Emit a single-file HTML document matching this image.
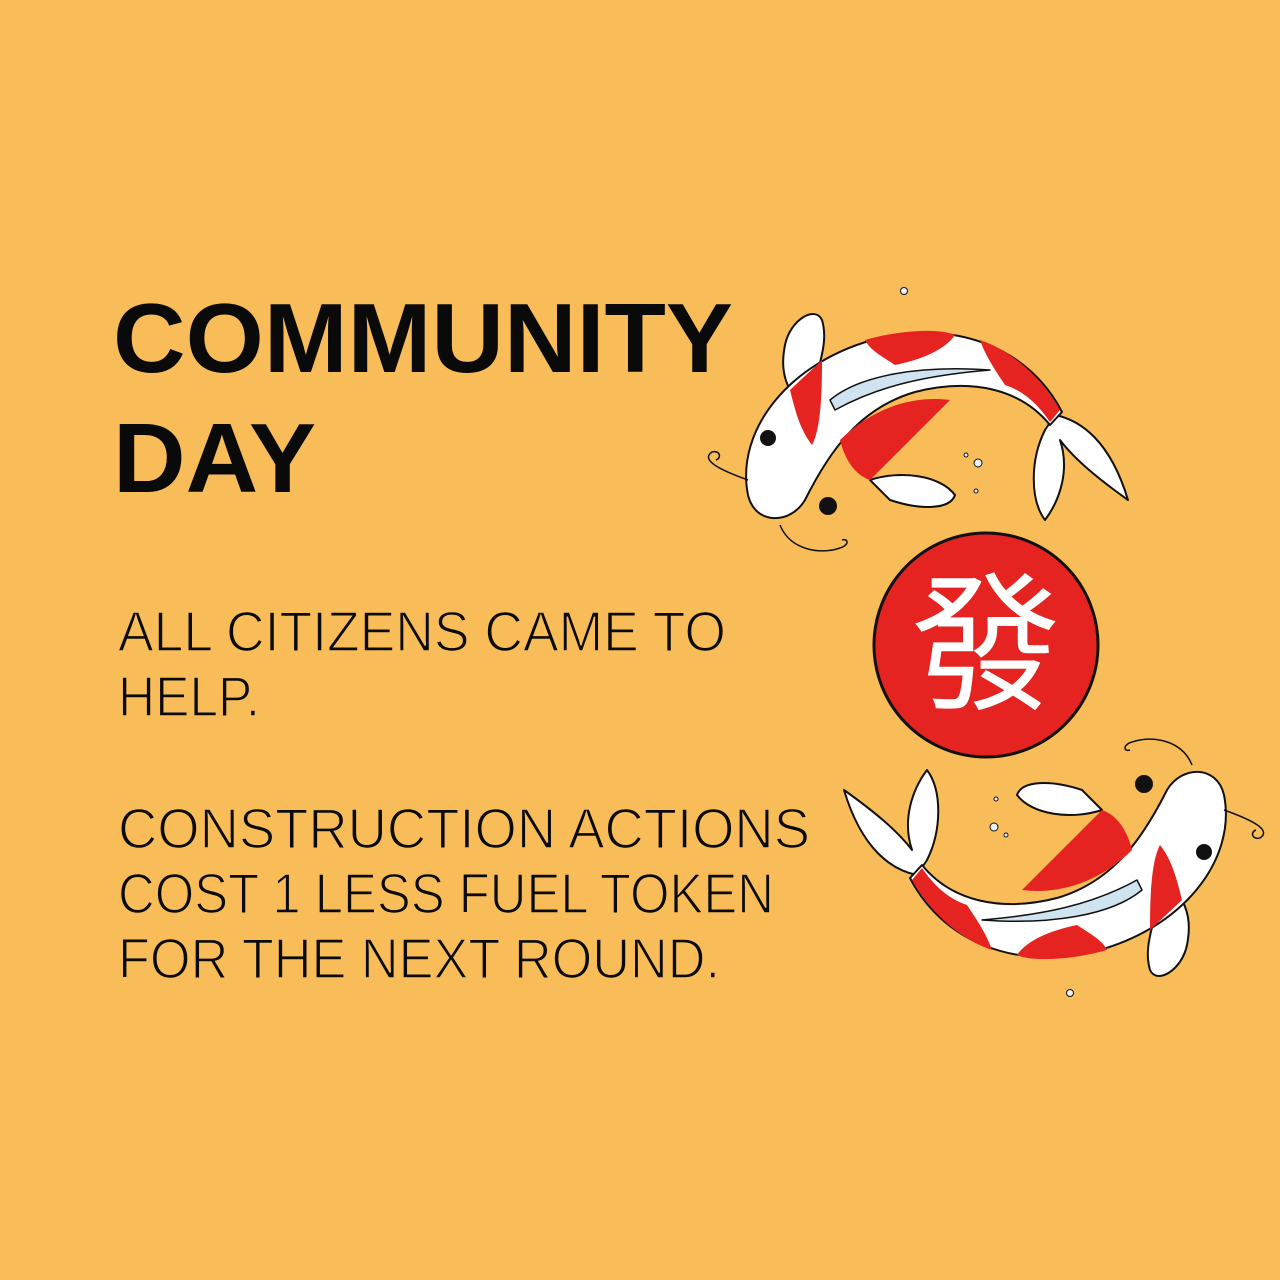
<!DOCTYPE html>
<html><head><meta charset="utf-8"><style>
html,body{margin:0;padding:0;background:#F8BD58;}
svg{display:block}
</style></head><body>
<svg width="1280" height="1280" viewBox="0 0 1280 1280" xmlns="http://www.w3.org/2000/svg">
<rect width="1280" height="1280" fill="#F8BD58"/>
<g font-family="'Liberation Sans', sans-serif" fill="#0a0a0a">
<text x="113" y="372" font-size="98" font-weight="bold" textLength="620" lengthAdjust="spacingAndGlyphs">COMMUNITY</text>
<text x="113" y="492" font-size="98" font-weight="bold" textLength="203" lengthAdjust="spacingAndGlyphs">DAY</text>
<g font-size="57" stroke="#F8BD58" stroke-width="1.6">
<text x="118" y="651" textLength="608" lengthAdjust="spacingAndGlyphs">ALL CITIZENS CAME TO</text>
<text x="118" y="716" textLength="142" lengthAdjust="spacingAndGlyphs">HELP.</text>
<text x="118" y="848" textLength="692" lengthAdjust="spacingAndGlyphs">CONSTRUCTION ACTIONS</text>
<text x="118" y="913" textLength="656" lengthAdjust="spacingAndGlyphs">COST 1 LESS FUEL TOKEN</text>
<text x="118" y="978" textLength="602" lengthAdjust="spacingAndGlyphs">FOR THE NEXT ROUND.</text>
</g>
</g>
<defs>
<g id="fish" stroke="#111" stroke-width="2" stroke-linejoin="round">
<path d="M1055,415 C1080,420 1110,440 1128,500 C1100,480 1075,460 1060,440 C1070,470 1060,500 1045,520 C1030,500 1030,460 1045,430 Z" fill="#fff"/>
<path d="M785,345 C790,320 815,305 822,320 C828,340 820,360 818,372 L790,390 C782,375 782,360 785,345 Z" fill="#fff"/>
<path d="M870,480 C900,470 940,475 955,495 C950,510 920,510 890,500 Z" fill="#fff"/>
<path d="M748,495 C735,430 790,360 880,338 C960,320 1030,350 1062,412 L1050,425 C1020,388 970,378 915,392 C860,408 830,450 805,500 C790,525 755,525 748,495 Z" fill="#fff"/>
<path d="M790,390 L822,360 C822,400 820,430 812,445 C800,430 795,410 790,390 Z" fill="#e52421" stroke="none"/>
<path d="M840,440 C870,410 910,395 950,400 C930,420 900,450 870,480 C855,475 845,460 840,440 Z" fill="#e52421" stroke="none"/>
<path d="M865,340 C900,330 940,328 955,335 C945,350 920,360 895,365 C880,355 870,350 865,340 Z" fill="#e52421" stroke="none"/>
<path d="M980,340 C1010,350 1040,375 1060,410 L1050,422 C1035,400 1020,390 1005,385 C995,370 985,355 980,340 Z" fill="#e52421" stroke="none"/>
<path d="M830,400 C860,375 920,365 990,370 C930,375 880,385 835,410 Z" fill="#cfe3f0" stroke="#111" stroke-width="1.5"/>
<circle cx="768" cy="438" r="8" fill="#111" stroke="none"/>
<circle cx="828" cy="506" r="9" fill="#111" stroke="none"/>
<path d="M748,480 C720,470 700,460 712,452 C720,450 722,458 716,460" fill="none" stroke-width="1.5"/>
<path d="M780,525 C790,550 820,555 840,548 C850,545 848,538 842,540" fill="none" stroke-width="1.5"/>
<circle cx="978" cy="463" r="4" fill="#e8f0f8" stroke-width="1"/>
<circle cx="966" cy="455" r="2" fill="#e8f0f8" stroke-width="1"/>
<circle cx="976" cy="491" r="2" fill="#e8f0f8" stroke-width="1"/>
</g>
</defs>
<use href="#fish"/>
<use href="#fish" transform="rotate(180 986 645)"/>
<circle cx="904" cy="291" r="3.5" fill="#e8f0f8" stroke="#111" stroke-width="1"/>
<circle cx="1070" cy="993" r="3.5" fill="#e8f0f8" stroke="#111" stroke-width="1"/>
<circle cx="986" cy="645" r="112" fill="#e52421" stroke="#111" stroke-width="3"/>
<text x="986" y="698" font-size="150" fill="#fff" text-anchor="middle" font-family="'Liberation Sans','Noto Sans CJK TC',sans-serif">發</text>
</svg>
</body></html>
